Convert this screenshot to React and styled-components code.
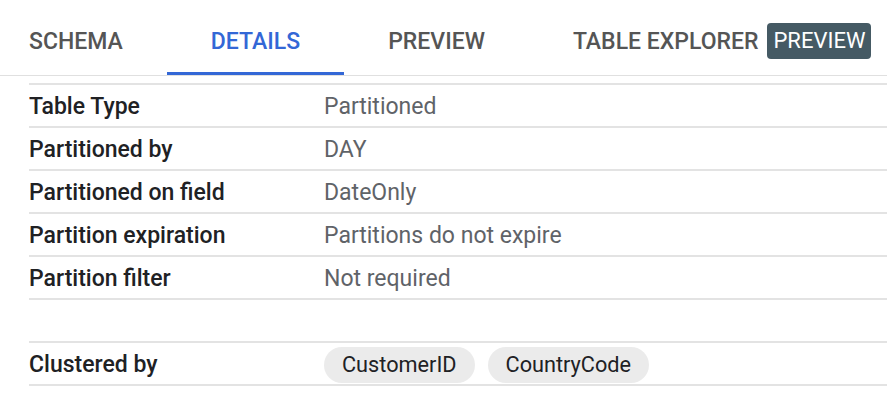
import React from "react";
import styled, { createGlobalStyle } from "styled-components";

const GlobalStyle = createGlobalStyle`
  body {
    margin: 0;
    background: #fff;
    font-family: Roboto, "Liberation Sans", sans-serif;
    overflow: hidden;
  }
`;

const Page = styled.div`
  width: 887px;
  height: 409px;
  display: flex;
  flex-direction: column;
`;

const TabBar = styled.div`
  display: flex;
  height: 75px;
  border-bottom: 1px solid #e0e0e0;
`;

const Tab = styled.div`
  display: flex;
  align-items: center;
  gap: 9px;
  height: 75px;
  box-sizing: border-box;
  padding: 10px 44px 0 ${(props) => props.padLeft || "44px"};
  font-size: 23px;
  font-weight: 500;
  color: ${(props) => (props.active ? "#3367d6" : "#555")};
  border-bottom: 3px solid ${(props) => (props.active ? "#3367d6" : "transparent")};
  white-space: nowrap;
`;

const Badge = styled.span`
  display: inline-flex;
  align-items: center;
  height: 36px;
  padding: 0 6px;
  border-radius: 4px;
  background: #455a64;
  color: #fff;
  font-size: 22px;
  font-weight: 400;
  margin-top: -1px;
`;

const Table = styled.div`
  margin: 7px 0 0 29px;
  border-top: 2px solid #e3e3e3;
`;

const Row = styled.div`
  display: flex;
  align-items: center;
  height: 39px;
  padding-top: 2px;
  border-top: ${(props) => (props.topLine ? "2px solid #e3e3e3" : "none")};
  border-bottom: ${(props) => (props.noLine ? "none" : "2px solid #e3e3e3")};
`;

const Label = styled.div`
  width: 295px;
  font-size: 23px;
  font-weight: 500;
  color: #202124;
`;

const Value = styled.div`
  font-size: 23px;
  color: #5f6368;
  display: flex;
  gap: 13px;
`;

const Chip = styled.span`
  display: inline-flex;
  align-items: center;
  height: 36px;
  padding: 0 18px;
  border-radius: 18px;
  background: #ebebeb;
  color: #202124;
  font-size: 21.7px;
`;

const details = [
  ["Table Type", "Partitioned"],
  ["Partitioned by", "DAY"],
  ["Partitioned on field", "DateOnly"],
  ["Partition expiration", "Partitions do not expire"],
  ["Partition filter", "Not required"],
];

export default function App() {
  return (
    <>
      <GlobalStyle />
      <Page>
        <TabBar>
          <Tab padLeft="29px">SCHEMA</Tab>
          <Tab active>DETAILS</Tab>
          <Tab>PREVIEW</Tab>
          <Tab>
            TABLE EXPLORER <Badge>PREVIEW</Badge>
          </Tab>
        </TabBar>
        <Table>
          {details.map(([label, value]) => (
            <Row key={label}>
              <Label>{label}</Label>
              <Value>{value}</Value>
            </Row>
          ))}
          <Row noLine />
          <Row topLine>
            <Label>Clustered by</Label>
            <Value>
              <Chip>CustomerID</Chip>
              <Chip>CountryCode</Chip>
            </Value>
          </Row>
        </Table>
      </Page>
    </>
  );
}
